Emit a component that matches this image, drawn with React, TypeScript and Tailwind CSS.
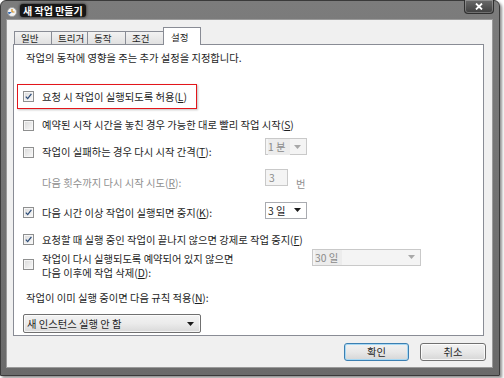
import React from 'react';

const tabs = [
    { label: '일반', w: 37 },
    { label: '트리거', w: 36 },
    { label: '동작', w: 38 },
    { label: '조건', w: 38 },
    { label: '설정', w: 37, active: true },
];

function Check({ checked }: { checked?: boolean }) {
    return (
        <span className="flex h-[11px] w-[11px] shrink-0 items-center justify-center border border-[#8e8f8f] bg-gradient-to-br from-[#d9d9d9] to-[#fafafa] shadow-[inset_0_0_0_1px_#f6f6f6]">
            {checked && (
                <svg width="9" height="9" viewBox="0 0 9 9">
                    <path d="M1.8 4.6 L3.7 6.6 L7.4 1.9" fill="none" stroke="#2c4c78" strokeWidth="1.3" />
                </svg>
            )}
        </span>
    );
}

function Arrow({ disabled }: { disabled?: boolean }) {
    return (
        <svg width="7" height="4" viewBox="0 0 7 4" className="shrink-0">
            <path d="M0 0 H7 L3.5 4 Z" fill={disabled ? '#a8a8a8' : '#1a1a1a'} />
        </svg>
    );
}

function Select({ text, w, disabled }: { text: string; w: number; disabled?: boolean }) {
    return (
        <div
            className={`flex h-[17px] shrink-0 items-center justify-between border pl-[2px] pr-[5px] ${
                disabled ? 'border-[#c9c9c9] bg-[#f4f4f4] text-[#8a8a8a]' : 'border-[#a9abb0] bg-white text-[#1e1e1e]'
            }`}
            style={{ width: w }}
        >
            <span className={disabled ? 'bg-[#ececec] pr-[4px]' : ''}>{text}</span>
            <Arrow disabled={disabled} />
        </div>
    );
}

function Label({ children, disabled }: { children: React.ReactNode; disabled?: boolean }) {
    return <span className={`leading-[14px] whitespace-nowrap ${disabled ? 'text-[#8f8f8f]' : 'text-[#1e1e1e]'}`}>{children}</span>;
}

export default function App() {
    return (
        <div className="h-[378px] w-[504px] overflow-hidden bg-white font-['Noto_Sans_CJK_KR',sans-serif] text-[10.3px]">
            <div className="flex h-[376px] w-[500px] flex-col rounded-t-[6px] border border-[#3a3a3a] bg-gradient-to-b from-[#7c7c7c] to-[#6a6a6a] shadow-[2px_2px_3px_rgba(0,0,0,0.45)]">
                {/* Title bar */}
                <div className="flex h-[19px] shrink-0 items-start pl-[6px]">
                    <svg width="10" height="10" viewBox="0 0 10 10" className="mt-[6px]">
                        <circle cx="5" cy="5" r="4.5" fill="#f4f4f4" stroke="#9a9a9a" strokeWidth="0.8" />
                        <path d="M5 5 V2 M5 5 H7.5" stroke="#d08a1a" strokeWidth="1.2" />
                        <path d="M5 5 L2 7.5 A4 4 0 0 1 1 5 Z" fill="#3b6fb5" />
                    </svg>
                    <div className="ml-[3px] mt-[3px] flex h-[13px] items-center rounded-[3px] bg-[#161616] px-[3px] text-[10px] font-bold leading-none text-white shadow-[0_0_3px_#161616]">
                        새 작업 만들기
                    </div>
                    <div className="ml-auto mr-[5px] -mt-px flex h-[14px] w-[30px] items-center justify-center rounded-b-[4px] border border-t-0 border-[#2f2f2f] bg-gradient-to-b from-[#6a6a6a] to-[#404040] shadow-[inset_0_0_0_1px_rgba(255,255,255,0.25)]">
                        <svg width="8" height="7" viewBox="0 0 8 7">
                            <path d="M1 0.5 L7 6.5 M7 0.5 L1 6.5" stroke="#ffffff" strokeWidth="1.8" />
                        </svg>
                    </div>
                </div>

                {/* Client area */}
                <div className="ml-[6px] flex h-[347px] w-[485px] flex-col bg-[#f0f0f0] shadow-[0_0_0_1px_#9a9a9a]">
                    {/* Tabs */}
                    <div className="mt-[7px] flex h-[17px] items-end pl-[7px] text-[9.5px]">
                        {tabs.map(t =>
                            t.active ? (
                                <div
                                    key={t.label}
                                    className="relative z-10 -mb-px -ml-px flex h-[18px] items-start border border-b-0 border-[#898c95] bg-white pl-[7px] pt-[2px] leading-[14px] text-[#1e1e1e]"
                                    style={{ width: t.w + 1 }}
                                >
                                    {t.label}
                                </div>
                            ) : (
                                <div
                                    key={t.label}
                                    className="-ml-px flex h-[13px] items-center border border-b-0 border-[#898c95] bg-gradient-to-b from-[#f2f2f2] to-[#e1e1e1] pl-[6px] leading-[12px] text-[#1e1e1e] first:ml-0"
                                    style={{ width: t.w + 1 }}
                                >
                                    {t.label}
                                </div>
                            )
                        )}
                    </div>

                    {/* Settings panel */}
                    <div className="ml-[6px] flex h-[292px] w-[471px] flex-col border border-[#898c95] bg-white pl-[9px] text-[#1e1e1e]">
                        <div className="ml-[3px] mt-[5px]">
                            <Label>작업의 동작에 영향을 주는 추가 설정을 지정합니다.</Label>
                        </div>

                        {/* Highlighted option */}
                        <div className="-ml-[6px] mt-[19px] flex h-[25px] w-[180px] items-center gap-[8px] border-[1.5px] border-[#e3161b] pl-[5px] shadow-[1px_1px_2px_rgba(0,0,0,0.25)]">
                            <Check checked />
                            <Label>
                                요청 시 작업이 실행되도록 허용(<u>L</u>)
                            </Label>
                        </div>

                        <div className="mt-[9px] flex items-center gap-[8px]">
                            <Check />
                            <Label>
                                예약된 시작 시간을 놓친 경우 가능한 대로 빨리 작업 시작(<u>S</u>)
                            </Label>
                        </div>

                        <div className="mt-[6px] flex items-start">
                            <div className="mt-[7px] flex w-[242px] items-center gap-[8px]">
                                <Check />
                                <Label>
                                    작업이 실패하는 경우 다시 시작 간격(<u>T</u>):
                                </Label>
                            </div>
                            <Select text="1 분" w={42} disabled />
                        </div>

                        <div className="mt-[10px] flex items-start">
                            <div className="mt-[6px] w-[242px] pl-[19px]">
                                <Label disabled>
                                    다음 횟수까지 다시 시작 시도(<u>R</u>):
                                </Label>
                            </div>
                            <div className="flex h-[17px] w-[23px] items-center border border-[#c9c9c9] bg-[#f4f4f4] pl-[3px] text-[#8a8a8a]">3</div>
                            <div className="ml-[8px] mt-[7px]">
                                <Label disabled>번</Label>
                            </div>
                        </div>

                        <div className="mt-[10px] flex items-start">
                            <div className="mt-[4px] flex w-[242px] items-center gap-[8px]">
                                <Check checked />
                                <Label>
                                    다음 시간 이상 작업이 실행되면 중지(<u>K</u>):
                                </Label>
                            </div>
                            <Select text="3 일" w={42} />
                        </div>

                        <div className="mt-[13px] flex items-center gap-[8px]">
                            <Check checked />
                            <Label>
                                요청할 때 실행 중인 작업이 끝나지 않으면 강제로 작업 중지(<u>F</u>)
                            </Label>
                        </div>

                        <div className="mt-[2px] flex items-start">
                            <div className="flex w-[289px] items-start gap-[8px]">
                                <div className="mt-[10px]">
                                    <Check />
                                </div>
                                <div className="mt-[3px] flex flex-col leading-[14px]">
                                    <span>작업이 다시 실행되도록 예약되어 있지 않으면</span>
                                    <span>
                                        다음 이후에 작업 삭제(<u>D</u>):
                                    </span>
                                </div>
                            </div>
                            <Select text="30 일" w={109} disabled />
                        </div>

                        <div className="ml-[3px] mt-[10px]">
                            <Label>
                                작업이 이미 실행 중이면 다음 규칙 적용(<u>N</u>):
                            </Label>
                        </div>

                        <div className="mt-[9px] flex h-[19px] w-[178px] items-center justify-between rounded-[2px] border border-[#707070] bg-gradient-to-b from-[#f3f3f3] via-[#ebebeb] to-[#d9d9d9] pl-[3px] pr-[6px] shadow-[inset_0_0_0_1px_rgba(255,255,255,0.7)]">
                            <span>새 인스턴스 실행 안 함</span>
                            <Arrow />
                        </div>
                    </div>

                    {/* Buttons */}
                    <div className="mt-[7px] flex justify-end gap-[11px] pr-[6px]">
                        <button className="flex h-[18px] w-[65px] items-center justify-center rounded-[3px] border border-[#3c7fb1] bg-gradient-to-b from-[#f2f2f2] via-[#e8e8e8] to-[#d6d6d6] text-[#1e1e1e] shadow-[inset_0_0_0_1px_#a6d8f4]">
                            확인
                        </button>
                        <button className="flex h-[18px] w-[66px] items-center justify-center rounded-[3px] border border-[#707070] bg-gradient-to-b from-[#f2f2f2] via-[#e8e8e8] to-[#d6d6d6] text-[#1e1e1e] shadow-[inset_0_0_0_1px_rgba(255,255,255,0.8)]">
                            취소
                        </button>
                    </div>
                </div>
            </div>
        </div>
    );
}
